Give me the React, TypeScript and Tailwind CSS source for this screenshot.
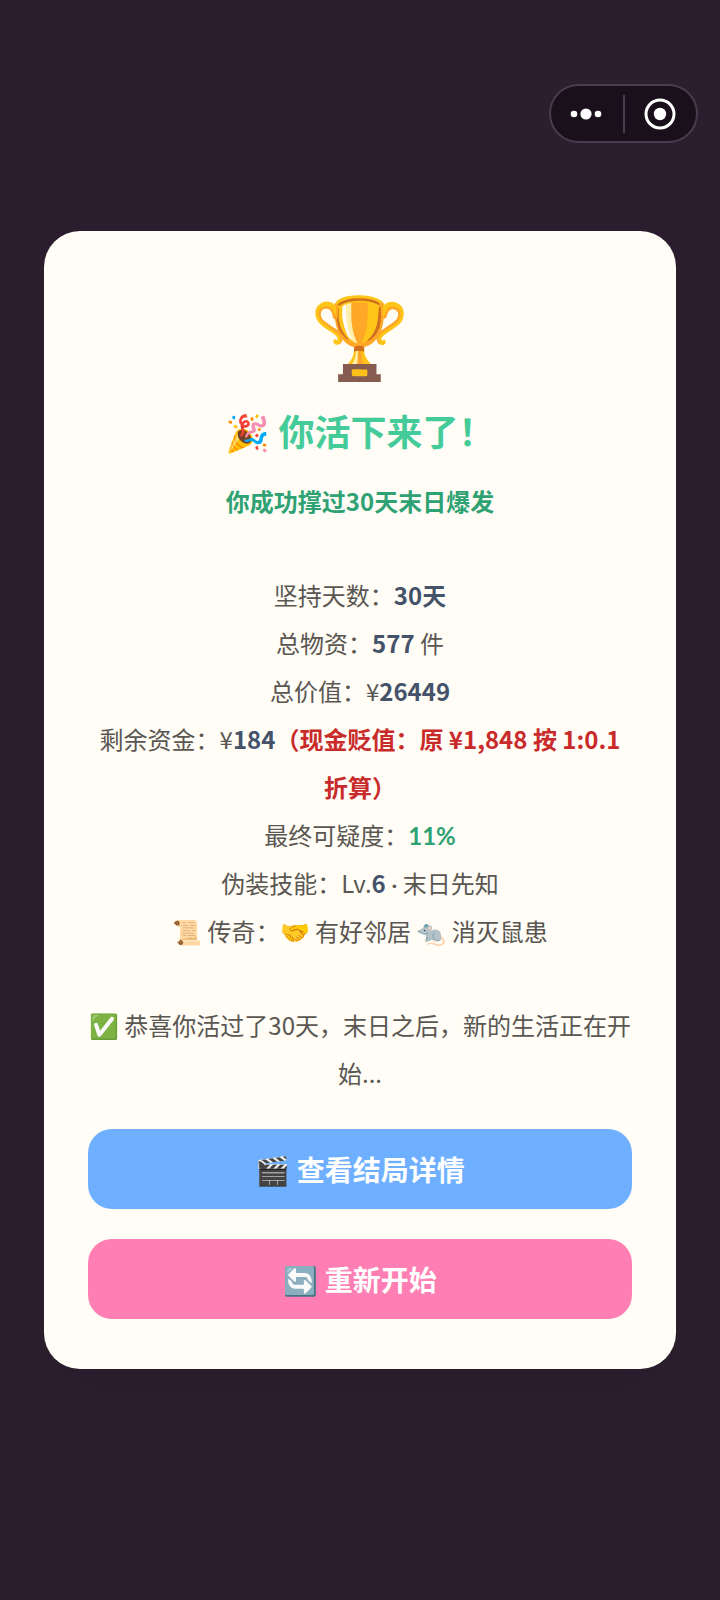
import type { ReactNode } from "react";

const strongClass = "font-bold text-[#44526a]";
const btnClass =
  "w-full h-20 rounded-3xl text-[28px] leading-10 font-bold text-white cursor-pointer";

function Stat({ label, children }: { label: string; children: ReactNode }) {
  return (
    <p>
      {label}：{children}
    </p>
  );
}

function Capsule() {
  return (
    <div className="flex items-center w-[149px] h-[59px] rounded-full border-2 border-[#4b3b4e] bg-[#1a101b]">
      <button type="button" aria-label="更多" className="flex-1 flex justify-center cursor-pointer">
        <svg width="34" height="12" viewBox="0 0 34 12" fill="#fff">
          <circle cx="4" cy="6" r="3.3" />
          <circle cx="16" cy="6" r="5.6" />
          <circle cx="28" cy="6" r="3.3" />
        </svg>
      </button>
      <div className="w-0.5 h-[38px] bg-[#4b3b4e]" />
      <button type="button" aria-label="关闭" className="flex-1 flex justify-center cursor-pointer">
        <svg width="32" height="32" viewBox="0 0 32 32">
          <circle cx="16" cy="16" r="14" fill="none" stroke="#fff" strokeWidth="3" />
          <circle cx="16" cy="16" r="6.2" fill="#fff" />
        </svg>
      </button>
    </div>
  );
}

export default function App() {
  return (
    <div className="min-h-screen bg-[#2c1e2e] font-['Noto_Sans_CJK_SC',sans-serif]" lang="zh-CN">
      <header className="flex justify-end pt-[84px] pr-[22px]">
        <Capsule />
      </header>

      <main className="mx-11 mt-[88px] px-11 pt-11 pb-[50px] rounded-[36px] bg-[#fffdf6] text-center text-2xl leading-12 text-[#5a5652] shadow-[0_20px_80px_rgba(0,0,0,0.08)]">
        <div className="text-[80px] leading-[112px]">🏆</div>
        <h1 className="mt-4 text-4xl leading-[54px] font-bold text-[#45cb9a]">🎉 你活下来了！</h1>
        <p className="mt-5 font-bold text-[#2fa274]">你成功撑过30天末日爆发</p>

        <section className="mt-[46px]">
          <Stat label="坚持天数">
            <strong className={strongClass}>30天</strong>
          </Stat>
          <Stat label="总物资">
            <strong className={strongClass}>577</strong> 件
          </Stat>
          <Stat label="总价值">
            ¥<strong className={strongClass}>26449</strong>
          </Stat>
          <Stat label="剩余资金">
            ¥<strong className={strongClass}>184</strong>
            <strong className="font-bold text-[#c92a2a]">
              （现金贬值：原 ¥1,848 按 1:0.1 <span className="inline-block">折算）</span>
            </strong>
          </Stat>
          <Stat label="最终可疑度">
            <strong className="font-['Lato'] leading-none font-bold text-[#2fa274]">11%</strong>
          </Stat>
          <Stat label="伪装技能">
            Lv.<strong className={strongClass}>6</strong>{" "}
            <span className="font-['Lato'] leading-none">·</span> 末日先知
          </Stat>
          <Stat label="📜 传奇">🤝 有好邻居 🐀 消灭鼠患</Stat>
        </section>

        <p className="mt-[46px]">✅ 恭喜你活过了30天，末日之后，新的生活正在开始...</p>

        <div className="mt-8 flex flex-col gap-[30px]">
          <button type="button" className={`${btnClass} bg-[#6eb0ff]`}>
            🎬 查看结局详情
          </button>
          <button type="button" className={`${btnClass} bg-[#ff7eb3]`}>
            🔄 重新开始
          </button>
        </div>
      </main>
    </div>
  );
}
